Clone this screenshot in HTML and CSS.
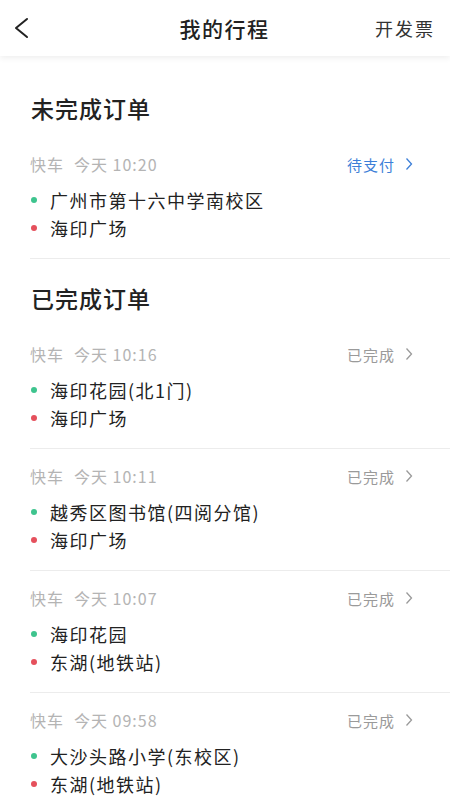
FILE: index.html
```html
<!DOCTYPE html>
<html lang="zh-CN">
<head>
    <meta charset="UTF-8">
    <meta name="viewport" content="width=device-width, initial-scale=1.0">
    <title>我的行程</title>
    <link rel="stylesheet" href="styles.css">
</head>
<body>
    <div class="header">
        <div class="back">
            <svg width="16" height="22" viewBox="0 0 16 22"><polyline points="13,2 2,11 13,20" fill="none" stroke="#222" stroke-width="2" stroke-linecap="round" stroke-linejoin="round"/></svg>
        </div>
        <div class="title">我的行程</div>
        <div class="invoice">开发票</div>
    </div>

    <div class="content">
        <div class="section">
            <h2>未完成订单</h2>
            <div class="trip">
                <div class="meta">
                    <span class="type">快车</span>
                    <span class="time">今天 10:20</span>
                    <span class="status pending">待支付
                        <svg width="8" height="14" viewBox="0 0 8 14"><polyline points="1.5,1.5 6.5,7 1.5,12.5" fill="none" stroke="currentColor" stroke-width="1.3"/></svg>
                    </span>
                </div>
                <div class="addr"><i class="dot start"></i>广州市第十六中学南校区</div>
                <div class="addr"><i class="dot end"></i>海印广场</div>
            </div>
        </div>

        <div class="section">
            <h2>已完成订单</h2>
            <div class="trip">
                <div class="meta">
                    <span class="type">快车</span>
                    <span class="time">今天 10:16</span>
                    <span class="status">已完成
                        <svg width="8" height="14" viewBox="0 0 8 14"><polyline points="1.5,1.5 6.5,7 1.5,12.5" fill="none" stroke="currentColor" stroke-width="1.3"/></svg>
                    </span>
                </div>
                <div class="addr"><i class="dot start"></i>海印花园(北1门)</div>
                <div class="addr"><i class="dot end"></i>海印广场</div>
            </div>
            <div class="trip">
                <div class="meta">
                    <span class="type">快车</span>
                    <span class="time">今天 10:11</span>
                    <span class="status">已完成
                        <svg width="8" height="14" viewBox="0 0 8 14"><polyline points="1.5,1.5 6.5,7 1.5,12.5" fill="none" stroke="currentColor" stroke-width="1.3"/></svg>
                    </span>
                </div>
                <div class="addr"><i class="dot start"></i>越秀区图书馆(四阅分馆)</div>
                <div class="addr"><i class="dot end"></i>海印广场</div>
            </div>
            <div class="trip">
                <div class="meta">
                    <span class="type">快车</span>
                    <span class="time">今天 10:07</span>
                    <span class="status">已完成
                        <svg width="8" height="14" viewBox="0 0 8 14"><polyline points="1.5,1.5 6.5,7 1.5,12.5" fill="none" stroke="currentColor" stroke-width="1.3"/></svg>
                    </span>
                </div>
                <div class="addr"><i class="dot start"></i>海印花园</div>
                <div class="addr"><i class="dot end"></i>东湖(地铁站)</div>
            </div>
            <div class="trip">
                <div class="meta">
                    <span class="type">快车</span>
                    <span class="time">今天 09:58</span>
                    <span class="status">已完成
                        <svg width="8" height="14" viewBox="0 0 8 14"><polyline points="1.5,1.5 6.5,7 1.5,12.5" fill="none" stroke="currentColor" stroke-width="1.3"/></svg>
                    </span>
                </div>
                <div class="addr"><i class="dot start"></i>大沙头路小学(东校区)</div>
                <div class="addr"><i class="dot end"></i>东湖(地铁站)</div>
            </div>
        </div>
    </div>
</body>
</html>
```

FILE: styles.css
```css
body {
    margin: 0;
    background-color: #ffffff;
    color: #222222;
    font-family: "Noto Sans CJK SC", "Noto Sans", sans-serif;
    overflow: hidden;
}
.header {
    position: relative;
    height: 56px;
    display: flex;
    align-items: center;
    justify-content: space-between;
    padding: 0 15px 0 14px;
    background-color: #ffffff;
    box-shadow: 0 2px 6px rgba(0, 0, 0, 0.07);
}
.back {
    display: flex;
    align-items: center;
    width: 60px;
}
.title {
    font-size: 21px;
    font-weight: 500;
    letter-spacing: 1.5px;
}
.invoice {
    width: 60px;
    text-align: right;
    font-size: 18px;
    letter-spacing: 2px;
    color: #333333;
}
.content {
    padding-left: 30px;
}
.section {
    padding-top: 23px;
}
.section:first-child {
    padding-top: 36px;
}
h2 {
    margin: 0 0 13px 1px;
    font-size: 23px;
    line-height: 32px;
    font-weight: 500;
    letter-spacing: 1px;
}
.trip {
    padding: 13px 0 16px;
    border-bottom: 1px solid #ececec;
}
.meta {
    display: flex;
    align-items: center;
    height: 28px;
    padding-right: 37px;
    font-size: 16px;
    color: #b4b4b4;
    letter-spacing: 1px;
}
.type {
    margin-right: 10px;
}
.status {
    margin-left: auto;
    display: flex;
    align-items: center;
    gap: 10px;
    font-size: 15px;
    color: #9a9a9a;
}
.status.pending {
    color: #3d7fd8;
}
.addr {
    display: flex;
    align-items: center;
    height: 28px;
    font-size: 18px;
    letter-spacing: 1.5px;
    color: #222222;
}
.meta + .addr {
    margin-top: 8px;
}
.dot {
    width: 6px;
    height: 6px;
    border-radius: 50%;
    margin: 0 13px 0 1px;
}
.dot.start {
    background-color: #3ec48e;
}
.dot.end {
    background-color: #e5505c;
}
```
